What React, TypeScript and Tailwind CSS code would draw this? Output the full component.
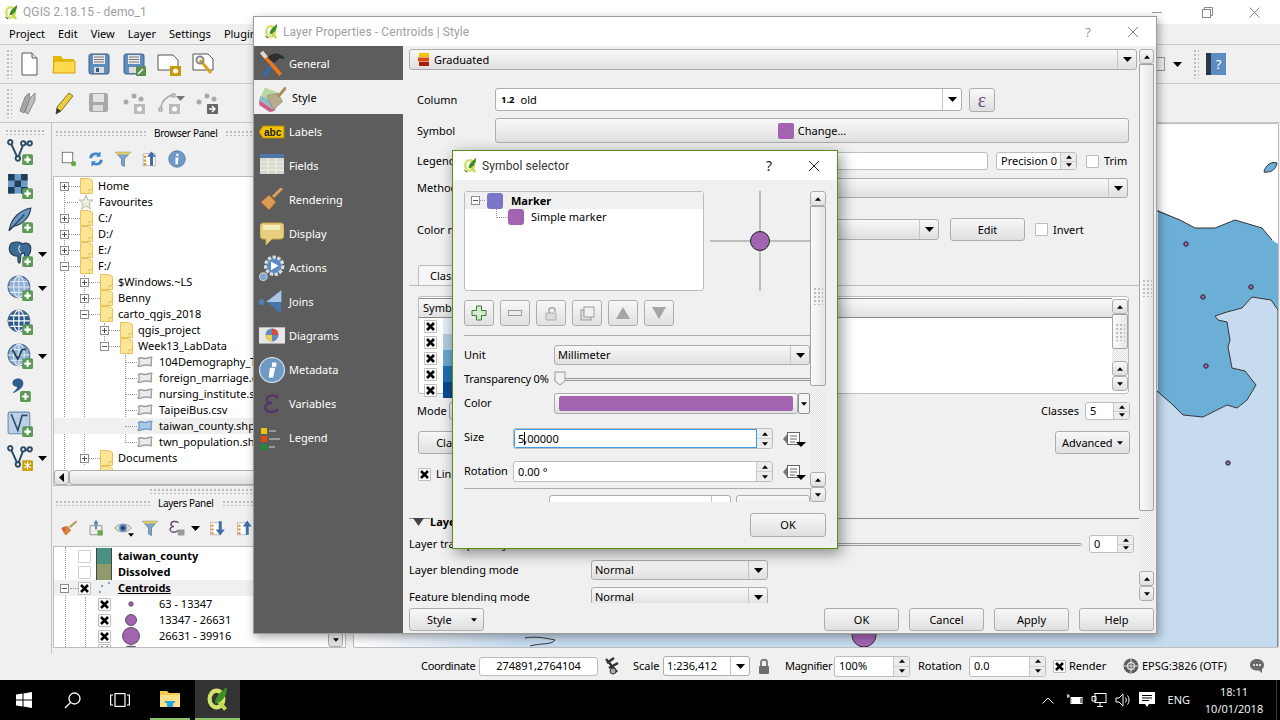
import type { ReactNode } from 'react'

const btn = 'rounded-[3px] border border-[#adadad] bg-linear-to-b from-[#f8f8f8] to-[#e0e0e0]'

function Ico({ s = 24, children, className = '' }: { s?: number; children: ReactNode; className?: string }) {
  return (
    <svg width={s} height={s} viewBox="0 0 24 24" className={`shrink-0 ${className}`}>
      {children}
    </svg>
  )
}

const PlusBadge = ({ x = 14, y = 14 }: { x?: number; y?: number }) => (
  <g transform={`translate(${x} ${y})`}>
    <rect width="10" height="10" rx="1.5" fill="#5c9a58" />
    <path d="M5 2v6M2 5h6" stroke="#fff" strokeWidth="2" />
  </g>
)

const Tri = ({ up = false, small = false }: { up?: boolean; small?: boolean }) => (
  <svg width={small ? 6 : 9} height={small ? 4 : 5} viewBox="0 0 9 5" className="shrink-0">
    <path d={up ? 'M0 5L4.5 0L9 5z' : 'M0 0L9 0L4.5 5z'} fill="#000" />
  </svg>
)

function QgisLogo({ s = 16 }: { s?: number }) {
  return (
    <svg width={s} height={s} viewBox="0 0 16 16" className="shrink-0">
      <ellipse cx="7" cy="8" rx="4.6" ry="5.6" fill="none" stroke="#d3e26a" strokeWidth="2.8" />
      <path d="M8 9l5 6" stroke="#c4d752" strokeWidth="2.6" />
      <path d="M6 11C6 6 10 3 14 0C14 5 12 9 7 11z" fill="#3d8f22" />
      <path d="M1.500 13l3 2" stroke="#222" strokeWidth="1" />
    </svg>
  )
}

function Combo({ className = '', children, arrow = 'w-[19px]' }: { className?: string; children?: ReactNode; arrow?: string }) {
  return (
    <div className={`flex items-stretch ${btn} ${className}`}>
      <div className="flex min-w-0 flex-1 items-center gap-1 overflow-hidden whitespace-nowrap pl-[3px]">{children}</div>
      <div className={`flex shrink-0 items-center justify-center border-l border-[#c6c6c6] ${arrow}`}>
        <Tri />
      </div>
    </div>
  )
}

function Btn({ className = '', children }: { className?: string; children?: ReactNode }) {
  return <div className={`flex items-center justify-center ${btn} ${className}`}>{children}</div>
}

function Spin({ className = '', children, w = 'w-[16px]' }: { className?: string; children?: ReactNode; w?: string }) {
  return (
    <div className={`flex items-stretch overflow-hidden rounded-[3px] border border-[#bdbdbd] bg-white ${className}`}>
      <div className="flex min-w-0 flex-1 items-center overflow-hidden whitespace-nowrap pl-1">{children}</div>
      <div className={`flex shrink-0 flex-col border-l border-[#c6c6c6] bg-[#ececec] ${w}`}>
        <div className="flex flex-1 items-center justify-center border-b border-[#cfcfcf]">
          <Tri up small />
        </div>
        <div className="flex flex-1 items-center justify-center">
          <Tri small />
        </div>
      </div>
    </div>
  )
}

function Check({ on = false, className = '' }: { on?: boolean; className?: string }) {
  return (
    <div className={`flex h-[13px] w-[13px] shrink-0 items-center justify-center rounded-[1px] border border-[#bdbdbd] bg-white ${className}`}>
      {on && (
        <svg width="9" height="9" viewBox="0 0 9 9">
          <path d="M1 1L8 8M8 1L1 8" stroke="#000" strokeWidth="2.6" />
        </svg>
      )}
    </div>
  )
}

function Grip({ className = '' }: { className?: string }) {
  return <div className={`bg-[radial-gradient(#bdbdbd_0.8px,transparent_1px)] bg-[length:4px_4px] ${className}`} />
}

function SbBtn({ down = false }: { down?: boolean }) {
  return (
    <div className={`flex h-[15px] shrink-0 items-center justify-center ${btn} rounded-[3px] border-[#8f8f8f]`}>
      <Tri up={!down} small />
    </div>
  )
}

function VScroll({ className = '', thumb = '' }: { className?: string; thumb?: string }) {
  return (
    <div className={`flex shrink-0 flex-col ${className}`}>
      <SbBtn />
      <div className={`flex shrink-0 items-center justify-center rounded-b-[2px] border border-[#a3a3a3] bg-linear-to-r from-[#fafafa] to-[#e6e6e6] ${thumb}`}>
        <Grip className="h-[18px] w-[10px]" />
      </div>
      <div className="flex-1 bg-[repeating-conic-gradient(#e4e4e4_0_25%,#f6f6f6_0_50%)] bg-[length:2px_2px]" />
      <SbBtn />
      <SbBtn down />
    </div>
  )
}

const Folder = () => (
  <svg width="13" height="16" viewBox="0 0 13 16" className="shrink-0">
    <path d="M.5.5h8l4 2v13h-12z" fill="#fde596" stroke="#e9c25a" />
    <path d="M9 15.5v-4h3.5" fill="none" stroke="#e9c25a" />
  </svg>
)

const Blob = ({ blue = false }: { blue?: boolean }) => (
  <svg width="16" height="12" viewBox="0 0 16 12" className="shrink-0">
    <path
      d="M1.500 2.500C3.500 .5 5.500 2.500 8 2.500C11 2.500 12.500 .5 14.800 1.500C13.500 4.500 14.800 7 14 10C11 8 8 9.500 5 9.500C3.500 9.500 2.500 11.500 1 10C2.500 7.500 2.800 5 1.500 2.500z"
      fill={blue ? '#a9c9ea' : '#ececec'}
      stroke={blue ? '#7c9cc0' : '#9e9e9e'}
      strokeWidth="1.400"
    />
  </svg>
)

const Star = () => (
  <svg width="16" height="16" viewBox="0 0 16 16" className="shrink-0">
    <path d="M8 1l2 5h5l-4 3.5 1.5 5.5L8 12l-4.500 3L5 9.500 1 6h5z" fill="#eeeee2" stroke="#b9b9a5" />
  </svg>
)

type TreeRow = { lv: number; ex?: '+' | '-'; icon: 'folder' | 'star' | 'file' | 'blue'; label: string; hl?: boolean }

const browserRows: TreeRow[] = [
  { lv: 0, ex: '+', icon: 'folder', label: 'Home' },
  { lv: 0, icon: 'star', label: 'Favourites' },
  { lv: 0, ex: '+', icon: 'folder', label: 'C:/' },
  { lv: 0, ex: '+', icon: 'folder', label: 'D:/' },
  { lv: 0, ex: '+', icon: 'folder', label: 'E:/' },
  { lv: 0, ex: '-', icon: 'folder', label: 'F:/' },
  { lv: 1, ex: '+', icon: 'folder', label: '$Windows.~LS' },
  { lv: 1, ex: '+', icon: 'folder', label: 'Benny' },
  { lv: 1, ex: '-', icon: 'folder', label: 'carto_qgis_2018' },
  { lv: 2, ex: '+', icon: 'folder', label: 'qgis_project' },
  { lv: 2, ex: '-', icon: 'folder', label: 'Week13_LabData' },
  { lv: 3, icon: 'file', label: '104Demography_Taiwan.csv' },
  { lv: 3, icon: 'file', label: 'foreign_marriage.csv' },
  { lv: 3, icon: 'file', label: 'nursing_institute.shp' },
  { lv: 3, icon: 'file', label: 'TaipeiBus.csv' },
  { lv: 3, icon: 'blue', label: 'taiwan_county.shp', hl: true },
  { lv: 3, icon: 'file', label: 'twn_population.shp' },
  { lv: 1, ex: '+', icon: 'folder', label: 'Documents' },
]

const indent = ['pl-[6px]', 'pl-[26px]', 'pl-[46px]', 'pl-[71px]']

const Expander = ({ kind }: { kind: '+' | '-' }) => (
  <svg width="9" height="9" viewBox="0 0 9 9" className="shrink-0">
    <rect x=".5" y=".5" width="8" height="8" fill="#fff" stroke="#8c8c8c" />
    <path d={kind === '+' ? 'M2 4.500h5M4.500 2v5' : 'M2 4.500h5'} stroke="#555" />
  </svg>
)

function BrowserTree() {
  return (
    <div className="relative h-[294px] overflow-hidden border border-b-0 border-[#bdbdbd] bg-white pt-[1px]">
      <div className="absolute left-[10px] top-[10px] h-[284px] border-l border-dotted border-[#999]" />
      <div className="absolute left-[30px] top-[98px] h-[190px] border-l border-dotted border-[#999]" />
      <div className="absolute left-[50px] top-[146px] h-[20px] border-l border-dotted border-[#999]" />
      <div className="absolute left-[71px] top-[178px] h-[88px] border-l border-dotted border-[#999]" />
      {browserRows.map((r) => (
        <div key={r.label} className={`relative flex h-4 items-center whitespace-nowrap ${indent[r.lv]} ${r.hl ? 'bg-[#f0f0f0]' : ''}`}>
          {r.ex ? <Expander kind={r.ex} /> : r.lv < 3 ? <div className="w-[4px] shrink-0" /> : null}
          <div className={`shrink-0 border-t border-dotted border-[#999] ${r.lv === 3 ? 'w-[12px]' : r.ex ? 'w-[11px]' : 'w-[14px]'}`} />
          {r.icon === 'folder' && <Folder />}
          {r.icon === 'star' && <Star />}
          {r.icon === 'file' && <Blob />}
          {r.icon === 'blue' && <Blob blue />}
          <span className={r.lv === 3 ? 'ml-[6px]' : 'ml-[5px]'}>{r.label}</span>
        </div>
      ))}
      <div className="relative flex h-4 items-center pl-[26px]">
        <Expander kind="+" />
        <div className="w-[11px] shrink-0 border-t border-dotted border-[#999]" />
        <Folder />
      </div>
    </div>
  )
}

const legendRows: [string, number][] = [
  ['63 - 13347', 2.2],
  ['13347 - 26631', 5.5],
  ['26631 - 39916', 8.5],
]

function LayerTree() {
  return (
    <div className="relative h-[102px] overflow-hidden border border-[#bdbdbd] bg-white pt-[1px]">
      <div className="absolute left-[11px] top-0 h-[102px] border-l border-dotted border-[#999]" />
      <div className="absolute left-[31px] top-[50px] h-[52px] border-l border-dotted border-[#999]" />
      {[
        ['taiwan_county', 'bg-[#4b9181]'],
        ['Dissolved', 'bg-[#90996a]'],
      ].map(([t, c]) => (
        <div key={t} className="relative flex h-4 items-center whitespace-nowrap pl-[24px] font-bold">
          <Check className="border-[#d0d0d0]" />
          <div className={`ml-[5px] h-4 w-4 border-x border-[#444] ${c}`} />
          <span className="ml-[6px]">{t}</span>
        </div>
      ))}
      <div className="relative flex h-4 items-center whitespace-nowrap bg-[#f0f0f0] pl-[6px] font-bold">
        <Expander kind="-" />
        <div className="ml-[1px] w-[8px] border-t border-dotted border-[#999]" />
        <Check on />
        <svg width="16" height="16" viewBox="0 0 16 16" className="ml-[5px]">
          <circle cx="4" cy="12" r="1.200" fill="#7ea6d0" />
          <circle cx="6" cy="6" r="1.200" fill="#7ea6d0" />
          <circle cx="13" cy="3" r="1.200" fill="#7ea6d0" />
        </svg>
        <span className="ml-[6px] underline">Centroids</span>
      </div>
      {legendRows.map(([t, r]) => (
        <div key={t} className="relative flex h-4 items-center whitespace-nowrap pl-[44px]">
          <Check on />
          <div className="relative ml-[6px] h-4 w-[35px] shrink-0">
            <svg width="24" height="30" viewBox="0 0 24 30" className="absolute left-[2px] top-[-7px]">
              <circle cx="12" cy="15" r={r} fill="#a264b0" stroke="#3b3b3b" strokeWidth=".8" />
            </svg>
          </div>
          <span className="ml-[7px] w-[100px] shrink-0 text-left">{t}</span>
        </div>
      ))}
      <div className="relative flex h-4 items-start overflow-hidden pl-[44px]">
        <Check on />
        <svg width="28" height="16" viewBox="0 0 28 16" className="ml-[6px]">
          <circle cx="14" cy="14" r="12" fill="#a264b0" stroke="#3b3b3b" strokeWidth=".8" />
        </svg>
      </div>
      <div className="absolute bottom-0 right-[2px] h-[15px] w-[15px]">
        <SbBtn down />
      </div>
    </div>
  )
}

const V = () => (
  <g fill="none" stroke="#2b4a63" strokeWidth="1.800">
    <path d="M3.500 3.500L10 18L15 5L21 4" />
    <circle cx="3" cy="3" r="2" fill="#fff" />
    <circle cx="10" cy="18" r="2" fill="#fff" />
    <circle cx="15" cy="4" r="2" fill="#fff" />
    <circle cx="21" cy="4" r="2" fill="#fff" />
  </g>
)

function Globe({ dark = false }: { dark?: boolean }) {
  return (
    <g>
      <circle cx="11" cy="11" r="10" fill={dark ? '#2c5a8c' : '#8fb0d4'} stroke="#4a6d91" />
      <path d="M1 11h20M11 1v20M3 6h16M3 16h16" stroke={dark ? '#fff' : '#dfe9f4'} strokeWidth={dark ? 1.200 : 1} fill="none" />
      <ellipse cx="11" cy="11" rx="5" ry="10" fill="none" stroke={dark ? '#fff' : '#dfe9f4'} />
    </g>
  )
}

function LeftStrip() {
  const Row = ({ children, arrow = false }: { children: ReactNode; arrow?: boolean }) => (
    <div className="flex h-[34px] items-center pl-[7px]">
      {children}
      {arrow && (
        <div className="ml-[5px]">
          <Tri />
        </div>
      )}
    </div>
  )
  return (
    <div className="flex w-[52px] shrink-0 flex-col border-r border-[#c4c4c4] pt-[6px]">
      <Grip className="mx-[5px] h-[6px] shrink-0" />
      <div className="mt-[0px]">
        <Row>
          <Ico s={26}><V /><PlusBadge /></Ico>
        </Row>
        <Row>
          <Ico s={26}>
            <rect x="1" y="1" width="18" height="18" fill="#6f9ac6" />
            <path d="M1 1h6v6H1zM13 1h6v6h-6zM7 7h6v6H7zM1 13h6v6H1zM13 13h6v6h-6z" fill="#203d5c" />
            <PlusBadge />
          </Ico>
        </Row>
        <Row>
          <Ico s={26}>
            <path d="M2 21C4 10 12 3 22 1C21 9 15 16 6 18z" fill="#6d94bd" stroke="#28425e" />
            <path d="M2 22L16 7" stroke="#1f3650" />
            <PlusBadge />
          </Ico>
        </Row>
        <Row arrow>
          <Ico s={26}>
            <path d="M4 2C9 0 13 1 14 3C17 1 22 2 22 7C22 12 19 15 17 15C16 15 16 12 16 11L13 12L12 20C10 21 10 18 10 14C5 14 2 11 2 7C2 5 3 3 4 2z" fill="#3d6b96" stroke="#1d3a55" />
            <path d="M12 4C10 7 11 10 13 11" fill="none" stroke="#cfe0f0" />
            <PlusBadge />
          </Ico>
        </Row>
        <Row arrow>
          <Ico s={26}><Globe /><PlusBadge /></Ico>
        </Row>
        <Row>
          <Ico s={26}><Globe dark /><PlusBadge /></Ico>
        </Row>
        <Row arrow>
          <Ico s={26}>
            <Globe />
            <path d="M5 6L10 15L14 6L18 6" fill="none" stroke="#23384e" strokeWidth="1.500" />
            <PlusBadge />
          </Ico>
        </Row>
        <Row>
          <Ico s={26}>
            <path d="M6 3C9 0 16 1 15 7C14 11 9 14 5 15C8 12 10 10 9 9C5 9 4 5 6 3z" fill="#2f5d8c" />
            <PlusBadge x={12} y={13} />
          </Ico>
        </Row>
        <Row>
          <Ico s={26}>
            <rect x="1" y="1" width="20" height="20" rx="2" fill="#bcd1e8" stroke="#6a8cb0" />
            <path d="M4 3L10 18L14 4L19 4" fill="none" stroke="#2b4a63" strokeWidth="1.500" />
            <PlusBadge />
          </Ico>
        </Row>
        <Row arrow>
          <Ico s={26}>
            <V />
            <g transform="translate(14 14)">
              <rect width="10" height="10" rx="1" fill="#c9a214" />
              <path d="M5 1.500v7M2 3l6 4M8 3l-6 4" stroke="#fff" />
            </g>
          </Ico>
        </Row>
      </div>
    </div>
  )
}

function PanelHeader({ title, left }: { title: string; left: string }) {
  return (
    <div className="flex h-[14px] shrink-0 items-center gap-2 px-[2px]">
      <Grip className={`h-[6px] shrink-0 ${left}`} />
      <span className="whitespace-nowrap text-[10px] tracking-[-0.3px]">{title}</span>
      <Grip className="h-[6px] flex-1" />
    </div>
  )
}

function LeftPanels() {
  return (
    <div className="flex w-[294px] shrink-0 flex-col pl-[1px] pt-[3px]">
      <PanelHeader title="Browser Panel" left="w-[91px]" />
      <div className="flex h-[36px] shrink-0 items-center gap-[9px] pl-[7px] pt-[2px]">
        <Ico s={18}>
          <rect x="3" y="3" width="14" height="14" fill="#fff" stroke="#555" />
          <circle cx="18" cy="18" r="3.500" fill="#6aa84f" />
        </Ico>
        <Ico s={18}>
          <path d="M3 11C3 5 9 2 15 4L18 2V9H11L14 7C10 6 7 8 7 11z" fill="#3f86c8" />
          <path d="M21 13C21 19 15 22 9 20L6 22V15H13L10 17C14 18 17 16 17 13z" fill="#3f86c8" />
        </Ico>
        <Ico s={18}>
          <path d="M2 3H22L14 12V22L10 20V12z" fill="#7fa3c7" stroke="#5b7a99" />
          <path d="M2 3H22L20 6H4z" fill="#e9cf5a" />
        </Ico>
        <Ico s={18}>
          <rect x="3" y="5" width="16" height="16" fill="#fff" stroke="#aaa" />
          <path d="M4 9h3M4 14h3M4 19h3" stroke="#ea8a1e" strokeWidth="2.500" />
          <path d="M14 2L20 9H16V21H12V9H8z" fill="#3f6fa6" />
        </Ico>
        <Ico s={18}>
          <circle cx="12" cy="12" r="11" fill="#6f9ac6" stroke="#4a739c" />
          <path d="M11 5h3v3h-3zM10 10h4l-1 9h-3z" fill="#fff" />
        </Ico>
      </div>
      <BrowserTree />
      <div className="flex h-[16px] shrink-0 items-stretch border border-t-0 border-[#bdbdbd] bg-[#f0f0f0]">
        <div className={`flex w-[15px] shrink-0 items-center justify-center ${btn}`}>
          <svg width="5" height="9" viewBox="0 0 5 9"><path d="M5 0V9L0 4.500z" /></svg>
        </div>
        <div className={`flex-1 ${btn}`} />
      </div>
      <div className="flex h-[10px] shrink-0 items-center pl-[96px] pr-[52px]">
        <Grip className="h-[6px] w-full" />
      </div>
      <PanelHeader title="Layers Panel" left="w-[95px]" />
      <div className="flex h-[36px] shrink-0 items-center gap-[9px] pl-[7px]">
        <Ico s={18}>
          <path d="M2 12L10 9L15 15L8 22C5 20 3 16 2 12z" fill="#d08a3c" />
          <path d="M2 12L7 10L7 18z" fill="#d94f4f" />
          <path d="M13 11L22 3" stroke="#b59a55" strokeWidth="3" />
        </Ico>
        <Ico s={18}>
          <path d="M4 9h6V4h4v5h6v12H4z" fill="#eee" stroke="#777" />
          <path d="M12 2v12" stroke="#3f6fa6" strokeWidth="2" />
          <rect x="14" y="15" width="7" height="7" fill="#6aa84f" />
        </Ico>
        <div className="relative">
          <Ico s={18}>
            <path d="M1 12C6 5 18 5 23 12C18 19 6 19 1 12z" fill="#ddd" stroke="#888" />
            <circle cx="12" cy="12" r="5" fill="#4e7fb3" />
            <circle cx="12" cy="12" r="2" fill="#12253a" />
          </Ico>
          <div className="absolute bottom-0 right-[-2px]">
            <Tri small />
          </div>
        </div>
        <Ico s={18}>
          <path d="M2 3H22L14 12V22L10 20V12z" fill="#7fa3c7" stroke="#5b7a99" />
          <path d="M2 3H22L20 6H4z" fill="#e9cf5a" />
        </Ico>
        <div className="flex items-center gap-[5px]">
          <Ico s={18}>
            <path d="M14 5C10 2 4 3 4 7C4 9 6 10 8 10C5 10 2 12 3 15C5 19 11 18 14 15" fill="none" stroke="#6a4a7e" strokeWidth="2" />
            <rect x="13" y="14" width="9" height="8" rx="1" fill="#9a9a9a" />
          </Ico>
          <Tri />
        </div>
        <Ico s={18}>
          <rect x="2" y="5" width="12" height="16" fill="#fff" stroke="#aaa" />
          <path d="M3 9h3M3 14h3M3 19h3" stroke="#ea8a1e" strokeWidth="2.500" />
          <path d="M15 22L21 14H17V3H13V14H9z" fill="#3f6fa6" />
        </Ico>
        <Ico s={18}>
          <rect x="2" y="5" width="12" height="16" fill="#fff" stroke="#aaa" />
          <path d="M3 9h3M3 14h3M3 19h3" stroke="#ea8a1e" strokeWidth="2.500" />
          <path d="M15 2L21 10H17V21H13V10H9z" fill="#3f6fa6" />
        </Ico>
      </div>
      <LayerTree />
    </div>
  )
}

function MapCanvas() {
  return (
    <div className="ml-[7px] mb-[6px] flex-1 overflow-hidden rounded-[2px] border border-[#bdbdbd] bg-white">
      <svg viewBox="354 124 924 523" className="block h-full w-full">
        <defs>
          <linearGradient id="fade" x1="0" x2="1" y1="0" y2="0">
            <stop offset="0" stopColor="#fff" />
            <stop offset=".2" stopColor="#c6dbef" />
          </linearGradient>
        </defs>
        <path
          d="M354 600H1158V210L1180 220L1195 228L1215 228L1235 220L1262 228L1272 240L1278 244V310L1271 300L1252 297L1242 308L1227 312L1215 316L1218 320L1227 322L1230 340L1228 347L1232 368L1245 371L1256 385L1247 400L1237 408L1227 405L1203 417L1183 415L1173 405L1158 393V648H354z"
          fill="#6baed6"
        />
        <path
          d="M1278 310L1271 300L1252 297L1242 308L1227 312L1215 316L1218 320L1227 322L1230 340L1228 347L1232 368L1245 371L1256 385L1247 400L1237 408L1227 405L1203 417L1183 415L1173 405L1150 385V648H1278z"
          fill="#c6dbef"
          stroke="#333"
          strokeWidth="1"
        />
        <path d="M1150 208L1180 220L1195 228L1215 228L1235 220L1262 228L1272 240" fill="none" stroke="#333" />
        <rect x="354" y="600" width="800" height="48" fill="url(#fade)" />
        <path d="M1264 172C1265 165 1272 161 1277 163C1276 170 1270 173 1264 172z" fill="#6baed6" stroke="#333" />
        <path d="M525 638C535 636 545 638 555 640C552 645 540 643 530 646" fill="none" stroke="#333" />
        <circle cx="864" cy="635" r="12" fill="#a264b0" stroke="#333" />
        {[
          [1186, 244],
          [1251, 287],
          [1203, 297],
          [1206, 366],
          [1228, 463],
        ].map(([cx, cy]) => (
          <circle key={cx} cx={cx} cy={cy} r="2.200" fill="#a264b0" stroke="#222" />
        ))}
      </svg>
    </div>
  )
}

function Toolbars() {
  return (
    <>
      <div className="flex h-[39px] shrink-0 items-center border-b border-[#c8c8c8] pl-[6px]">
        <Grip className="h-[30px] w-[6px]" />
        <div className="ml-[5px] flex items-center gap-[11px]">
          <Ico>
            <path d="M5 1H15L20 6V23H5z" fill="#fff" stroke="#555" />
            <path d="M15 1V6H20" fill="#e8e8e8" stroke="#555" />
          </Ico>
          <Ico>
            <path d="M1 21V4H9L11 7H22V21z" fill="#e6b800" />
            <path d="M1 21L2 9H23V21z" fill="#ffd94d" stroke="#d0a500" />
          </Ico>
          <Ico>
            <rect x="2" y="2" width="20" height="20" rx="2" fill="#5e8cbc" stroke="#3c5f87" />
            <rect x="6" y="3" width="12" height="9" fill="#e9e9e9" />
            <path d="M7 5h10M7 7.500h10M7 10h10" stroke="#777" />
            <rect x="7" y="15" width="10" height="6" fill="#ddd" />
            <rect x="9" y="16" width="3" height="4" fill="#355a80" />
          </Ico>
          <Ico>
            <rect x="2" y="2" width="20" height="20" rx="2" fill="#5e8cbc" stroke="#3c5f87" />
            <rect x="6" y="3" width="12" height="9" fill="#e9e9e9" />
            <path d="M7 5h10M7 7.500h10M7 10h10" stroke="#777" />
            <rect x="7" y="15" width="8" height="6" fill="#ddd" />
            <rect x="14" y="14" width="10" height="10" rx="1" fill="#5a8f4e" />
            <path d="M16 22l5-5" stroke="#fff" strokeWidth="1.500" />
          </Ico>
          <Ico>
            <path d="M1 3H16L21 8V18H1z" fill="#fff" stroke="#555" />
            <rect x="13" y="14" width="11" height="10" fill="#c99a06" />
            <circle cx="18.500" cy="19" r="2.500" fill="#fff" />
          </Ico>
          <Ico>
            <path d="M1 2H16L21 7V18H1z" fill="#fff" stroke="#555" />
            <path d="M8 8L19 21" stroke="#d9a321" strokeWidth="3" />
            <circle cx="8" cy="8" r="3.500" fill="none" stroke="#888" strokeWidth="2" />
          </Ico>
        </div>
        <div className="ml-auto flex items-center pr-[54px]">
          <div className="h-[14px] w-[9px] border border-[#999] bg-[#eef2f4]" />
          <div className="ml-[8px]">
            <Tri />
          </div>
          <Grip className="ml-[11px] h-[30px] w-[6px]" />
          <div className="relative ml-[7px] flex h-[22px] w-[20px] items-center justify-center border-l-[5px] border-[#2a3a4a] bg-[#5c8cc0] text-[13px] text-white">?</div>
        </div>
      </div>
      <div className="flex h-[39px] shrink-0 items-center border-b border-[#c8c8c8] pl-[6px]">
        <Grip className="h-[30px] w-[6px]" />
        <div className="ml-[5px] flex items-center gap-[11px]">
          <Ico>
            <path d="M3 20L8 6L12 2L13 8L7 22z" fill="#a5a5a5" stroke="#888" />
            <path d="M8 21L13 7L18 2L18 9L11 23z" fill="#bdbdbd" stroke="#888" />
          </Ico>
          <Ico>
            <path d="M4 23L5 16L17 2L21 5L9 20z" fill="#eccd3a" stroke="#7f7030" />
            <path d="M4 23L5 17L9 20z" fill="#333" />
          </Ico>
          <Ico>
            <rect x="2" y="2" width="19" height="19" rx="2" fill="#a8a8a8" />
            <rect x="6" y="3" width="11" height="8" fill="#e4e4e4" />
            <rect x="6" y="14" width="10" height="6" fill="#ddd" />
          </Ico>
          <Ico>
            <circle cx="4" cy="11" r="2.500" fill="#a8a8a8" />
            <circle cx="12" cy="5" r="2.500" fill="#a8a8a8" />
            <circle cx="19" cy="8" r="2.500" fill="#a8a8a8" />
            <rect x="12" y="13" width="11" height="10" fill="#bbb" />
            <circle cx="17.500" cy="18" r="2.500" fill="#fff" />
          </Ico>
          <Ico>
            <path d="M4 18C4 10 10 5 16 4" fill="none" stroke="#aaa" strokeWidth="1.500" />
            <rect x="2" y="17" width="3" height="3" fill="#ddd" stroke="#999" />
            <rect x="15" y="3" width="3" height="3" fill="#ddd" stroke="#999" />
            <rect x="12" y="13" width="11" height="10" fill="#bbb" />
            <circle cx="17.500" cy="18" r="2.500" fill="#fff" />
          </Ico>
        </div>
        <div className="ml-[-5px] mt-[-10px] opacity-50">
          <Tri />
        </div>
        <div className="ml-[10px]">
          <Ico>
            <circle cx="4" cy="11" r="2.500" fill="#a8a8a8" />
            <circle cx="12" cy="5" r="2.500" fill="#a8a8a8" />
            <circle cx="19" cy="8" r="2.500" fill="#a8a8a8" />
            <rect x="12" y="13" width="11" height="10" rx="1" fill="#666" />
            <path d="M14 18h5M17 15l3 3-3 3" stroke="#fff" strokeWidth="1.500" fill="none" />
          </Ico>
        </div>
      </div>
    </>
  )
}

function StatusBar() {
  return (
    <div className="flex h-[26px] shrink-0 items-center whitespace-nowrap pb-[2px] pl-[421px]">
      <span className="w-[58px] shrink-0 tracking-[-0.3px]">Coordinate</span>
      <div className="flex h-[19px] w-[119px] shrink-0 items-center justify-center rounded-[3px] border border-[#bdbdbd] bg-white">274891,2764104</div>
      <svg width="16" height="18" viewBox="0 0 16 18" className="ml-[6px] shrink-0">
        <path d="M2 2L13 15M3 6L10 1M5 11L14 6" stroke="#333" strokeWidth="2.500" />
        <circle cx="9" cy="14" r="3" fill="#aaa" stroke="#333" />
      </svg>
      <span className="ml-[13px] w-[30px] shrink-0">Scale</span>
      <Combo className="h-[20px] w-[87px] shrink-0 rounded-[3px] !from-white !to-white">1:236,412</Combo>
      <svg width="12" height="17" viewBox="0 0 12 17" className="ml-[8px] shrink-0">
        <path d="M3 8V4C3 1 9 1 9 4V8" fill="none" stroke="#777" strokeWidth="1.800" />
        <rect x="1" y="8" width="10" height="8" rx="1" fill="#6e6e6e" />
      </svg>
      <span className="ml-[15px] w-[49px] shrink-0 tracking-[-0.3px]">Magnifier</span>
      <Spin className="h-[21px] w-[76px] shrink-0">100%</Spin>
      <span className="ml-[8px] w-[51px] shrink-0">Rotation</span>
      <Spin className="h-[21px] w-[77px] shrink-0">0.0</Spin>
      <Check on className="ml-[7px]" />
      <span className="ml-[3px] w-[54px] shrink-0">Render</span>
      <svg width="16" height="16" viewBox="0 0 16 16" className="shrink-0">
        <circle cx="8" cy="8" r="7.500" fill="#5d5d5d" />
        <circle cx="8" cy="8" r="3.500" fill="none" stroke="#ddd" strokeWidth="1.500" />
        <path d="M8 1v14M1 8h14" stroke="#ddd" />
      </svg>
      <span className="ml-[3px] w-[107px] shrink-0">EPSG:3826 (OTF)</span>
      <svg width="16" height="16" viewBox="0 0 16 16" className="shrink-0">
        <path d="M8 1C12 1 15 3.500 15 7C15 9 14 10.500 13 11V15L10 12.500C6 13 1 11.500 1 7C1 3.500 4 1 8 1z" fill="#6a6a6a" />
        <circle cx="5" cy="7" r="1" fill="#fff" />
        <circle cx="8" cy="7" r="1" fill="#fff" />
        <circle cx="11" cy="7" r="1" fill="#fff" />
      </svg>
    </div>
  )
}

function Taskbar() {
  return (
    <div className="flex h-10 shrink-0 items-stretch bg-black font-['Open_Sans',sans-serif] text-white">
      <div className="flex w-12 items-center justify-center">
        <svg width="16" height="16" viewBox="0 0 16 16">
          <path d="M0 2.500L6.500 1.600V7.500H0zM7.500 1.400L16 0V7.500H7.500zM0 8.500H6.500V14.400L0 13.500zM7.500 8.500H16V16L7.500 14.600z" fill="#fff" />
        </svg>
      </div>
      <div className="flex w-12 items-center justify-center">
        <svg width="17" height="17" viewBox="0 0 17 17" fill="none" stroke="#fff" strokeWidth="1.300">
          <circle cx="10.500" cy="6.500" r="5.500" />
          <path d="M6.500 10.500L1 16" />
        </svg>
      </div>
      <div className="flex w-12 items-center justify-center">
        <svg width="20" height="14" viewBox="0 0 20 14" fill="none" stroke="#fff" strokeWidth="1.200">
          <rect x="5" y=".6" width="10" height="12.800" />
          <path d="M3 2H.6V12H3M17 2H19.400V12H17" />
        </svg>
      </div>
      <div className="ml-[6px] flex w-[40px] items-center justify-center border-b-[2px] border-[#8cc36a]">
        <svg width="22" height="20" viewBox="0 0 22 20">
          <path d="M1 2H8L10 4H21V18H1z" fill="#f5c94e" />
          <path d="M1 6H21V18H1z" fill="#fbe08a" />
          <path d="M8 14h6v4H8z" fill="#27a0e6" />
          <path d="M6 13h10" stroke="#27a0e6" strokeWidth="2" />
        </svg>
      </div>
      <div className="ml-[5px] flex w-[45px] items-center justify-center border-b-[2px] border-[#8cc36a] bg-[#333]">
        <QgisLogo s={24} />
      </div>
      <div className="flex-1" />
      <div className="flex items-center text-[12px]">
        <svg width="12" height="7" viewBox="0 0 12 7" fill="none" stroke="#fff" className="mr-[13px]">
          <path d="M.5 6.500L6 1L11.500 6.500" />
        </svg>
        <svg width="16" height="12" viewBox="0 0 16 12" fill="none" stroke="#fff" className="mr-[8px]">
          <rect x="4" y="3.500" width="11" height="6" />
          <rect x="5" y="4.500" width="8" height="4" fill="#fff" />
          <path d="M0 2h3M1 0v4" />
        </svg>
        <svg width="16" height="15" viewBox="0 0 16 15" fill="none" stroke="#fff" className="mr-[8px]">
          <rect x="4" y=".5" width="11" height="9" />
          <path d="M1 3.500H5V8H1zM9 10v3M6 13.500H12" />
        </svg>
        <svg width="16" height="14" viewBox="0 0 16 14" fill="none" stroke="#fff" className="mr-[8px]">
          <path d="M1 5H4L8 1V13L4 9H1zM10.500 4.500C11.500 6 11.500 8 10.500 9.500M12.500 2.500C14.500 5 14.500 9 12.500 11.500" />
        </svg>
        <svg width="16" height="16" viewBox="0 0 16 16" className="mr-[13px]">
          <path d="M0 0H16V12H10L8 15L6 12H0z" fill="#fff" />
          <path d="M3 3.500H13M3 6H13M3 8.500H10" stroke="#000" />
        </svg>
        <span className="mr-[14px] text-[11px]">ENG</span>
        <div className="flex w-[60px] flex-col items-center text-[11px] leading-[17px]">
          <span>18:11</span>
          <span>10/01/2018</span>
        </div>
        <div className="ml-[12px] h-full w-[1px] bg-[#3a3a3a]" />
        <div className="w-[3px]" />
      </div>
    </div>
  )
}

function NavIcon({ name }: { name: string }) {
  switch (name) {
    case 'General':
      return (
        <Ico s={26}>
          <path d="M4 24L14 10" stroke="#3869a8" strokeWidth="3.500" />
          <path d="M2 1L20 22" stroke="#ea7a18" strokeWidth="3.500" />
          <path d="M8 6C12 1 20 1 24 7L19 7L14 11L10 8z" fill="#2f2f2f" />
          <path d="M1 2L4 0L8 5L5 7z" fill="#ddd" />
        </Ico>
      )
    case 'Style':
      return (
        <Ico s={28}>
          <path d="M1 14L6 3L18 8L15 23z" fill="#b6d8a0" />
          <path d="M1 14L15 23L10 24L1 18z" fill="#cc5f8a" />
          <path d="M2 10L16 16L15 22L1 14z" fill="#7fa9d6" opacity=".7" />
          <path d="M8 10L17 8L21 15L13 22z" fill="#b9ad8d" stroke="#8a8068" strokeWidth=".5" />
          <path d="M17 11L24 3" stroke="#a58e5c" strokeWidth="2.500" />
        </Ico>
      )
    case 'Labels':
      return (
        <svg width="26" height="14" viewBox="0 0 26 14" className="shrink-0">
          <path d="M0 7L4 1H25V13H4z" fill="#f2c20a" stroke="#b08c00" />
          <text x="5" y="10.500" fontSize="10" fontWeight="bold" fill="#222" fontFamily="Liberation Sans, sans-serif">abc</text>
        </svg>
      )
    case 'Fields':
      return (
        <Ico s={24}>
          <rect x="0" y="0" width="24" height="20" fill="#d8d8cc" />
          <rect x="0" y="0" width="24" height="4" fill="#4e78a6" />
          <path d="M0 8h24M0 12h24M0 16h24M8 4v16M16 4v16" stroke="#f2f2ea" />
        </Ico>
      )
    case 'Rendering':
      return (
        <Ico s={24}>
          <path d="M1 14L9 7L16 14L9 22z" fill="#dc9a56" stroke="#a96e34" />
          <path d="M13 9L22 0" stroke="#d8a25e" strokeWidth="3" />
        </Ico>
      )
    case 'Display':
      return (
        <Ico s={24}>
          <path d="M3 1H21C23 1 24 3 24 5V13C24 16 22 17 20 17H12L6 23V17H3C1 17 0 15 0 13V5C0 3 1 1 3 1z" fill="#e8cf80" stroke="#c7a94c" />
          <path d="M3 3H20V8H3z" fill="#f6ebbb" />
        </Ico>
      )
    case 'Actions':
      return (
        <Ico s={26}>
          <circle cx="14" cy="10" r="8" fill="#5b8bbf" stroke="#dcdcdc" strokeWidth="3" strokeDasharray="3 1.500" />
          <circle cx="14" cy="10" r="6" fill="#5b8bbf" />
          <path d="M11 6L18 10L11 14z" fill="#fff" />
          <circle cx="4" cy="20" r="3.500" fill="#7ea6d0" stroke="#ccc" />
        </Ico>
      )
    case 'Joins':
      return (
        <Ico s={28}>
          <circle cx="3" cy="12" r="2.500" fill="#4e7fb3" />
          <path d="M7 12L20 2V22z" fill="#4674a8" />
          <path d="M7 12L20 2V12z" fill="#a9c6e6" />
        </Ico>
      )
    case 'Diagrams':
      return (
        <Ico s={26}>
          <rect x="0" y="4" width="24" height="15" fill="#e6e6e6" />
          <circle cx="12" cy="11" r="6" fill="#5b8bbf" />
          <path d="M12 11V5A6 6 0 0 1 18 11z" fill="#d94f3d" />
          <path d="M12 11H6A6 6 0 0 0 12 17z" fill="#f2cf4a" />
        </Ico>
      )
    case 'Metadata':
      return (
        <Ico s={26}>
          <circle cx="12" cy="12" r="11.500" fill="#6f9ac6" stroke="#dfe8f2" />
          <path d="M12 5h4v4h-4zM10 10h5l-2 9h-4z" fill="#fff" />
        </Ico>
      )
    case 'Variables':
      return (
        <Ico s={24}>
          <path d="M18 6C15 2 7 3 7 8C7 10 9 11 12 11C8 11 5 13 5 16C6 21 15 21 18 17" fill="none" stroke="#56356a" strokeWidth="2.500" />
        </Ico>
      )
    default:
      return (
        <Ico s={24}>
          <rect x="1" y="2" width="6" height="6" fill="#f2c20a" />
          <rect x="1" y="10" width="6" height="6" fill="#e0480f" />
          <rect x="1" y="18" width="6" height="6" fill="#1f8a3a" />
          <path d="M9 5h7M9 13h11M9 21h6" stroke="#999" strokeWidth="2" />
        </Ico>
      )
  }
}

const navItems = ['General', 'Style', 'Labels', 'Fields', 'Rendering', 'Display', 'Actions', 'Joins', 'Diagrams', 'Metadata', 'Variables', 'Legend']

function LayerProperties() {
  return (
    <div className="absolute left-[253px] top-[16px] flex h-[618px] w-[904px] flex-col border border-[#9c9c9c] bg-[#f0f0f0] shadow-[2px_3px_9px_rgba(0,0,0,0.35)]">
      <div className="flex h-[29px] shrink-0 items-center bg-white pl-[10px]">
        <QgisLogo s={15} />
        <span className="ml-[4px] font-['Roboto',sans-serif] text-[12px] tracking-[0.1px] text-[#a0a0a0]">Layer Properties - Centroids | Style</span>
        <span className="ml-auto text-[13px] text-[#9a9a9a]">?</span>
        <svg width="12" height="12" viewBox="0 0 12 12" className="ml-[36px] mr-[17px]" stroke="#8c8c8c">
          <path d="M1 1L11 11M11 1L1 11" />
        </svg>
      </div>
      <div className="flex min-h-0 flex-1">
        <div className="flex w-[149px] shrink-0 flex-col bg-[#5d5d5d] text-white">
          {navItems.map((n) => (
            <div key={n} className={`flex h-[34px] shrink-0 items-center pt-px ${n === 'Style' ? 'bg-[#f0f0f0] text-black' : ''}`}>
              <div className="flex w-[35px] shrink-0 items-center justify-center">
                <NavIcon name={n} />
              </div>
              <span className={n === 'Style' ? 'ml-[3px]' : ''}>{n}</span>
            </div>
          ))}
        </div>
        <div className="flex min-w-0 flex-1 flex-col">
          <div className="flex h-[557px] shrink-0">
            <div className="flex w-[736px] shrink-0 flex-col overflow-hidden pl-[6px] pt-[3px]">
              <Combo className="h-[21px] w-[728px] shrink-0">
                <svg width="13" height="13" viewBox="0 0 13 13" className="ml-[4px]">
                  <rect x="2" y="0" width="10" height="4" fill="#f7c20a" />
                  <rect x="1" y="4.500" width="11" height="4" fill="#e0480f" />
                  <rect x="2" y="9" width="10" height="4" fill="#a81e0a" />
                </svg>
                Graduated
              </Combo>
              <div className="mt-[18px] flex h-[23px] shrink-0 items-center pl-[8px]">
                <span className="w-[78px]">Column</span>
                <Combo className="h-full w-[467px] !from-white !to-white">
                  <span className="ml-[2px] text-[9.500px] font-bold">1.2</span>
                  <span className="ml-[2px]">old</span>
                </Combo>
                <Btn className="ml-[7px] h-[24px] w-[26px] font-['Liberation_Serif',serif] text-[20px] text-[#6a4a7e]">ε</Btn>
              </div>
              <div className="mt-[7px] flex h-[25px] shrink-0 items-center pl-[8px]">
                <span className="w-[78px]">Symbol</span>
                <Btn className="h-full w-[634px] gap-1">
                  <div className="h-4 w-4 rounded-[2px] bg-[#a264b0]" />
                  Change...
                </Btn>
              </div>
              <div className="mt-[9px] flex h-[18px] shrink-0 items-center pl-[8px]">
                <span className="w-[78px] shrink-0 whitespace-nowrap">Legend Format</span>
                <div className="h-full w-[493px] rounded-[3px] border border-[#bdbdbd] bg-white" />
                <Spin className="ml-[8px] h-full w-[81px]">Precision 0</Spin>
                <Check className="ml-[9px]" />
                <span className="ml-[5px]">Trim</span>
              </div>
              <div className="mt-[8px] flex h-[20px] shrink-0 items-center pl-[8px]">
                <span className="w-[78px]">Method</span>
                <Combo className="h-full w-[633px]">Color</Combo>
              </div>
              <div className="mt-[20px] flex h-[23px] shrink-0 items-center pl-[8px]">
                <span className="w-[78px] shrink-0 whitespace-nowrap">Color ramp</span>
                <Combo className="h-[21px] w-[444px]"> </Combo>
                <Btn className="ml-[11px] h-full w-[75px]">Edit</Btn>
                <Check className="ml-[10px]" />
                <span className="ml-[5px]">Invert</span>
              </div>
              <div className="mt-[25px] flex h-[20px] shrink-0 items-end border-b border-[#bdbdbd] pl-[9px]">
                <div className="flex h-[20px] w-[60px] items-center rounded-t-[3px] border border-b-0 border-[#bdbdbd] bg-[#f6f6f6] pl-[11px]">Classes</div>
              </div>
              <div className="ml-[9px] mt-[10px] flex h-[98px] w-[711px] shrink-0 rounded-[3px] border border-[#bdbdbd] bg-white">
                <div className="flex min-w-0 flex-1 flex-col pt-[1px]">
                  <div className="flex h-[20px] shrink-0 items-center border-y border-[#8c8c8c] bg-linear-to-b from-[#fafafa] to-[#e2e2e2] pl-[4px]">Symbol</div>
                  <div className="flex flex-col">
                    {['bg-[#e6eefa]', 'bg-[#b4cde4]', 'bg-[#6ca7d3]', 'bg-[#1f6fb2]', 'bg-[#0a4a90]'].map((c) => (
                      <div key={c} className="flex h-[16px] items-center pl-[5px]">
                        <Check on />
                        <div className={`ml-[6px] h-4 w-[60px] ${c}`} />
                      </div>
                    ))}
                  </div>
                </div>
                <VScroll className="h-full w-[16px] py-[2px]" thumb="h-[35px]" />
              </div>
              <div className="mt-[8px] flex h-[18px] shrink-0 items-center pl-[8px]">
                <span className="w-[32px]">Mode</span>
                <Combo className="h-[18px] w-[150px]">Equal Interval</Combo>
                <span className="ml-auto">Classes</span>
                <Spin className="ml-[6px] mr-[9px] h-[18px] w-[45px]" w="w-[16px]">5</Spin>
              </div>
              <div className="mt-[11px] flex h-[23px] shrink-0 items-center pl-[9px]">
                <Btn className="h-full w-[75px]">Classify</Btn>
                <div className={`ml-auto mr-[9px] flex h-full w-[75px] items-center justify-between px-[6px] ${btn}`}>
                  Advanced
                  <Tri small />
                </div>
              </div>
              <div className="mt-[13px] flex h-[14px] shrink-0 items-center pl-[9px]">
                <Check on />
                <span className="ml-[5px]">Link class boundaries</span>
              </div>
              <div className="mt-[37px] shrink-0 border-t border-[#8c8c8c]" />
              <div className="-mt-[5px] flex h-[16px] shrink-0 items-center pl-[4px] font-bold">
                <svg width="11" height="8" viewBox="0 0 11 8"><path d="M0 0H11L5.500 8z" fill="#444" /></svg>
                <span className="ml-[6px] bg-[#f0f0f0]">Layer rendering</span>
              </div>
              <div className="mt-[5px] flex h-[18px] shrink-0 items-center">
                <span className="w-[182px] shrink-0">Layer transparency</span>
                <div className="h-[3px] w-[491px] rounded-[2px] border border-[#9a9a9a] bg-[#eee]" />
                <Spin className="ml-[7px] h-[18px] w-[45px]" w="w-[16px]">0</Spin>
              </div>
              <div className="mt-[7px] flex h-[20px] shrink-0 items-center">
                <span className="w-[182px] shrink-0">Layer blending mode</span>
                <Combo className="h-full w-[177px]">Normal</Combo>
              </div>
              <div className="mt-[7px] flex h-[20px] shrink-0 items-center">
                <span className="w-[182px] shrink-0">Feature blending mode</span>
                <Combo className="h-full w-[177px]">Normal</Combo>
              </div>
            </div>
            <VScroll className="mt-[3px] h-[552px] w-[15px]" thumb="h-[447px]" />
          </div>
          <div className="flex flex-1 items-start pl-[6px] pt-[5px]">
            <div className={`flex h-[23px] w-[75px] items-center justify-between pl-[17px] pr-[6px] ${btn}`}>
              Style
              <Tri small />
            </div>
            <Btn className="ml-[340px] h-[23px] w-[75px] border-[#707070]">OK</Btn>
            <Btn className="ml-[10px] h-[23px] w-[75px]">Cancel</Btn>
            <Btn className="ml-[10px] h-[23px] w-[75px]">Apply</Btn>
            <Btn className="ml-[10px] h-[23px] w-[75px]">Help</Btn>
          </div>
        </div>
      </div>
    </div>
  )
}

const DataDefined = () => (
  <svg width="24" height="18" viewBox="0 0 24 18" className="shrink-0">
    <path d="M0 9L5 3V15z" fill="#777" />
    <rect x="4.500" y="2.500" width="12" height="12" fill="#fff" stroke="#666" />
    <path d="M7 6H14M7 9H14M7 12H12" stroke="#666" />
    <path d="M13 12H23L18 17z" fill="#000" />
  </svg>
)

function SymbolSelector() {
  return (
    <div className="absolute left-[452px] top-[150px] flex h-[399px] w-[386px] flex-col border border-[#5a8f1b] bg-[#f0f0f0] shadow-[3px_4px_14px_rgba(0,0,0,0.45)]">
      <div className="flex h-[29px] shrink-0 items-center bg-white pl-[10px]">
        <QgisLogo s={15} />
        <span className="ml-[4px] font-['Roboto',sans-serif] text-[12px] tracking-[0.1px] text-[#333]">Symbol selector</span>
        <span className="ml-auto text-[14px] text-[#222]">?</span>
        <svg width="12" height="12" viewBox="0 0 12 12" className="ml-[36px] mr-[17px]" stroke="#222">
          <path d="M1 1L11 11M11 1L1 11" />
        </svg>
      </div>
      <div className="ml-[11px] mt-[11px] flex h-[311px] shrink-0">
        <div className="flex w-[346px] shrink-0 flex-col overflow-hidden">
          <div className="flex h-[100px] shrink-0">
            <div className="h-full w-[240px] shrink-0 rounded-[3px] border border-[#bdbdbd] bg-white">
              <div className="flex h-[17px] items-center bg-[#f0f0f0] pl-[6px] font-bold">
                <Expander kind="-" />
                <div className="w-[5px] border-t border-dotted border-[#999]" />
                <div className="ml-[2px] h-4 w-4 rounded-[3px] bg-[#7c76c8]" />
                <span className="ml-[8px]">Marker</span>
              </div>
              <div className="flex h-[16px] items-center pl-[31px]">
                <div className="h-[9px] w-[12px] -translate-y-1 border-b border-l border-dotted border-[#999]" />
                <div className="h-4 w-4 rounded-[3px] bg-[#a264b0]" />
                <span className="ml-[7px]">Simple marker</span>
              </div>
            </div>
            <div className="flex w-[106px] items-center justify-center pl-[6px]">
              <svg width="100" height="100" viewBox="0 0 100 100">
                <path d="M50 0V100M0 50H100" stroke="#8a8a8a" />
                <circle cx="50" cy="50" r="9.500" fill="#a264b0" stroke="#222" />
              </svg>
            </div>
          </div>
          <div className="mt-[9px] flex h-[26px] shrink-0 gap-[6px]">
            <Btn className="h-full w-[30px]">
              <svg width="16" height="16" viewBox="0 0 16 16"><path d="M5.500 1H10.500V5.500H15V10.500H10.500V15H5.500V10.500H1V5.500H5.500z" fill="#d5e8d0" stroke="#3e7a3a" /></svg>
            </Btn>
            <Btn className="h-full w-[30px]">
              <svg width="14" height="6" viewBox="0 0 14 6"><rect x=".5" y=".5" width="13" height="5" fill="#eee" stroke="#9a9a9a" /></svg>
            </Btn>
            <Btn className="h-full w-[30px]">
              <svg width="12" height="15" viewBox="0 0 12 15"><path d="M4 7V4C4 1 10 1 10 4V6" fill="none" stroke="#aaa" strokeWidth="1.500" /><rect x="1" y="7" width="10" height="7" rx="1" fill="#ddd" stroke="#aaa" /></svg>
            </Btn>
            <Btn className="h-full w-[30px]">
              <svg width="15" height="15" viewBox="0 0 15 15"><rect x="1" y="4" width="10" height="10" fill="#ddd" stroke="#999" /><rect x="4" y="1" width="10" height="10" fill="#f0f0f0" stroke="#999" /></svg>
            </Btn>
            <Btn className="h-full w-[30px]">
              <svg width="14" height="12" viewBox="0 0 14 12"><path d="M7 0L14 12H0z" fill="#a5a5a5" /></svg>
            </Btn>
            <Btn className="h-full w-[30px]">
              <svg width="14" height="12" viewBox="0 0 14 12"><path d="M0 0H14L7 12z" fill="#a5a5a5" /></svg>
            </Btn>
          </div>
          <div className="mt-[9px] shrink-0 border-t border-[#aaa]" />
          <div className="mt-[9px] flex h-[20px] shrink-0 items-center">
            <span className="w-[90px]">Unit</span>
            <Combo className="h-full w-[256px]">Millimeter</Combo>
          </div>
          <div className="mt-[6px] flex h-[16px] shrink-0 items-center">
            <span className="w-[90px] whitespace-nowrap tracking-[-0.2px]">Transparency 0%</span>
            <div className="relative flex h-full flex-1 items-center">
              <div className="h-[3px] w-full border-y border-[#9a9a9a] bg-[#eee]" />
              <svg width="12" height="15" viewBox="0 0 12 15" className="absolute left-0 top-0">
                <path d="M1 1H11V10L6 14L1 10z" fill="#f2f2f2" stroke="#999" />
              </svg>
            </div>
          </div>
          <div className="mt-[6px] flex h-[21px] shrink-0 items-center">
            <span className="w-[90px] -translate-y-px">Color</span>
            <div className={`flex h-full w-[244px] items-center px-[4px] ${btn}`}>
              <div className="h-[15px] w-full rounded-[2px] bg-[#a264b0]" />
            </div>
            <div className="flex h-full w-[12px] items-center justify-center rounded-[2px] border border-[#8f8f8f] bg-[#f4f4f4]">
              <Tri small />
            </div>
          </div>
          <div className="mt-[14px] flex h-[21px] shrink-0 items-center">
            <span className="w-[49px] -translate-y-[2px]">Size</span>
            <div className="flex h-full w-[260px] overflow-hidden rounded-[3px] border border-[#bdbdbd] bg-[#ececec]">
              <div className="flex w-[243px] items-center border border-[#3e9af0] bg-white pl-[3px]">
                5<span className="mx-[-0.5px] inline-block h-[13px] w-px bg-black" />,00000
              </div>
              <div className="flex flex-1 flex-col">
                <div className="flex flex-1 items-center justify-center border-b border-[#cfcfcf]"><Tri up small /></div>
                <div className="flex flex-1 items-center justify-center"><Tri small /></div>
              </div>
            </div>
            <div className="ml-[10px]"><DataDefined /></div>
          </div>
          <div className="mt-[12px] flex h-[21px] shrink-0 items-center">
            <span className="w-[49px] -translate-y-px">Rotation</span>
            <Spin className="h-full w-[260px]">0.00 °</Spin>
            <div className="ml-[10px]"><DataDefined /></div>
          </div>
          <div className="mt-[6px] shrink-0 border-t border-[#aaa]" />
          <div className="mt-[6px] flex h-[20px] shrink-0 items-center pl-[85px]">
            <Combo className="h-full w-[182px] !from-white !to-white"> </Combo>
            <Btn className="ml-[5px] h-full w-[74px]"> </Btn>
          </div>
        </div>
        <VScroll className="h-full w-[16px]" thumb="h-[180px]" />
      </div>
      <div className="mt-[11px] flex justify-end pr-[11px]">
        <Btn className="h-[24px] w-[76px] border-[#8a8a8a]">OK</Btn>
      </div>
    </div>
  )
}

export default function App() {
  return (
    <div className="relative flex h-[720px] w-[1280px] flex-col overflow-hidden bg-[#f0f0f0] font-['Noto_Sans',sans-serif] text-[11px] leading-[14px] text-black">
      <div className="flex h-[24px] shrink-0 items-center bg-white pl-[4px]">
        <QgisLogo s={15} />
        <span className="ml-[4px] font-['Roboto',sans-serif] text-[12px] tracking-[0.1px] text-[#a0a0a0]">QGIS 2.18.15 - demo_1</span>
        <div className="ml-auto flex items-center">
          <div className="h-px w-[10px] bg-[#999]" />
          <svg width="11" height="11" viewBox="0 0 11 11" fill="none" stroke="#888" className="ml-[40px]">
            <rect x=".5" y="2.500" width="8" height="8" />
            <path d="M2.500 2.500V.5H10.500V8.500H8.500" />
          </svg>
          <svg width="11" height="11" viewBox="0 0 11 11" stroke="#888" className="ml-[36px] mr-[20px]">
            <path d="M.5 .5L10.500 10.500M10.500 .5L.5 10.500" />
          </svg>
        </div>
      </div>
      <div className="flex h-[21px] shrink-0 items-center gap-[13px] border-b border-[#c8c8c8] pl-[9px]">
        {['Project', 'Edit', 'View', 'Layer', 'Settings', 'Plugins', 'Vector', 'Raster', 'Database', 'Web', 'Processing', 'Help'].map((m) => (
          <span key={m}>{m}</span>
        ))}
      </div>
      <Toolbars />
      <div className="flex min-h-0 flex-1">
        <LeftStrip />
        <LeftPanels />
        <MapCanvas />
        <div className="w-[1px] shrink-0" />
      </div>
      <StatusBar />
      <Taskbar />
      <LayerProperties />
      <SymbolSelector />
    </div>
  )
}
